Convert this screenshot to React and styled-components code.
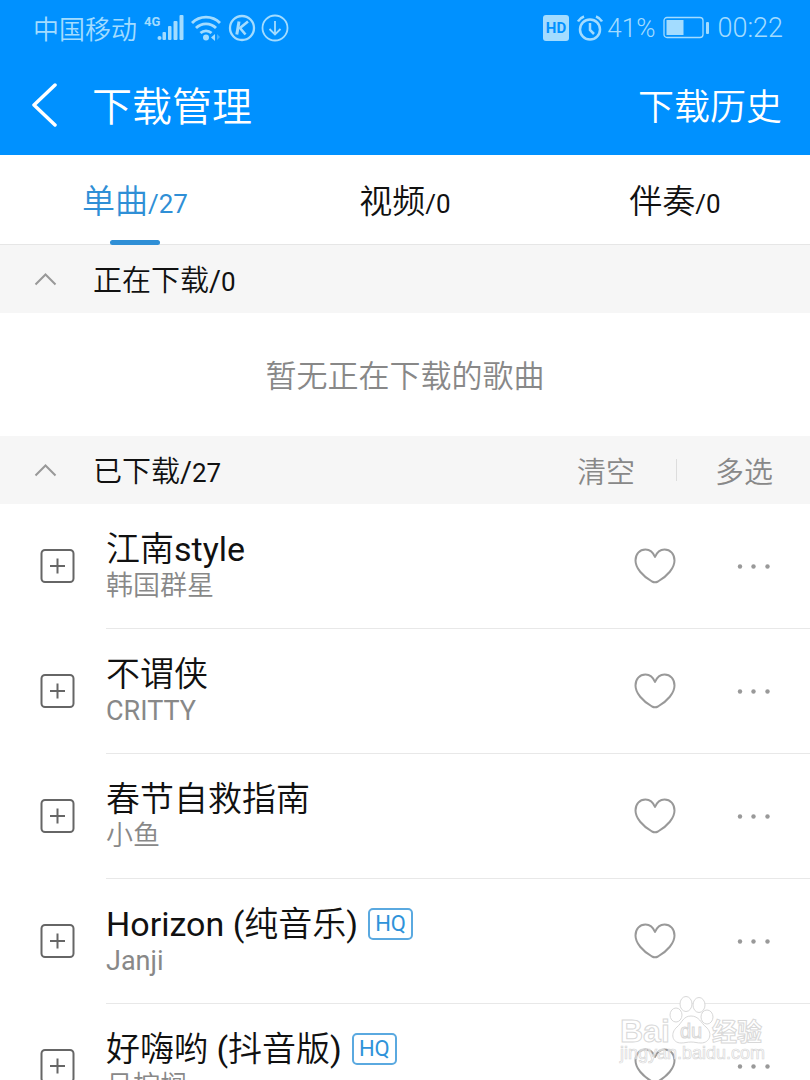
import React from 'react';
import styled, { createGlobalStyle } from 'styled-components';

const GlobalStyle = createGlobalStyle`
  * {
    box-sizing: border-box;
  }

  body {
    margin: 0;
    background-color: #fff;
    color: #111;
    font-family: Roboto, 'Noto Sans CJK SC DemiLight', 'Noto Sans CJK SC', sans-serif;
  }

  button {
    padding: 0;
    border: 0;
    background: none;
    color: inherit;
    font: inherit;
  }

  svg {
    display: block;
    flex: none;
  }
`;

const Page = styled.div`
  position: relative;
  height: 100vh;
  overflow: hidden;
`;

const Top = styled.header`
  background-color: #0091ff;
  color: #fff;
  font-weight: 350;
`;

const StatusBar = styled.div`
  display: flex;
  justify-content: space-between;
  align-items: center;
  height: 56px;
  padding: 0 27px 0 33px;
  color: #a3dcff;
  font-size: 26px;
  line-height: 36px;
`;

const StatusGroup = styled.div`
  display: flex;
  align-items: center;
  gap: ${({ $gap }) => $gap}px;
`;

const Carrier = styled.span`
  padding-top: 3px;
`;

const Clock = styled.span`
  font-size: 27px;
`;

const NavBar = styled.div`
  display: flex;
  align-items: center;
  height: 99px;
  padding: 0 28px 0 31px;
`;

const BackButton = styled.button`
  display: flex;
  width: 61px;
`;

const Title = styled.h1`
  flex: 1;
  margin: 0;
  padding-top: 5px;
  font-size: 40px;
  font-weight: inherit;
  line-height: 56px;
`;

const HistoryButton = styled.button`
  padding-top: 5px;
  font-size: 36px;
  line-height: 56px;
`;

const Tabs = styled.nav`
  display: flex;
  height: 90px;
  border-bottom: 1px solid #e6e6e6;
`;

const Tab = styled.button`
  position: relative;
  flex: 1;
  padding-top: 7px;
  color: ${({ $active }) => ($active ? '#2f8fd6' : '#111')};
  font-size: 33px;
  line-height: 48px;

  &::after {
    content: '';
    display: ${({ $active }) => ($active ? 'block' : 'none')};
    position: absolute;
    bottom: -1px;
    left: 50%;
    width: 50px;
    height: 5px;
    margin-left: -25px;
    border-radius: 3px;
    background-color: #2f8fd6;
  }
`;

const Count = styled.span`
  font-size: 26px;
`;

const SectionBar = styled.div`
  display: flex;
  align-items: center;
  height: 68px;
  padding: 0 37px 0 34px;
  background-color: #f6f6f6;
  font-size: 29px;
  line-height: 40px;
`;

const Fold = styled.button`
  display: flex;
  align-items: center;
  gap: 36px;
  margin-right: auto;
`;

const SectionName = styled.span`
  padding-top: 5px;
`;

const SectionAction = styled.button`
  padding-top: 5px;
  color: #888;
`;

const Divider = styled.span`
  width: 1px;
  height: 22px;
  margin: 0 38px 0 41px;
  background-color: #ddd;
`;

const Empty = styled.p`
  margin: 0;
  padding: 42px 0 37px;
  color: #888;
  font-size: 31px;
  line-height: 44px;
  text-align: center;
`;

const SongList = styled.ul`
  margin: 0;
  padding: 0;
  list-style: none;
`;

const Song = styled.li`
  display: flex;
  height: 125px;
  padding-left: 40px;
`;

const AddButton = styled.button`
  display: flex;
  align-items: center;
  width: 66px;
`;

const SongBody = styled.div`
  display: flex;
  flex: 1;
  align-items: center;
  padding-right: 39px;
  border-bottom: 1px solid #e8e8e8;
`;

const SongText = styled.div`
  flex: 1;
  padding-bottom: 2px;
`;

const SongName = styled.div`
  display: flex;
  align-items: center;
  gap: 10px;
  font-size: 34px;
  line-height: 42px;
`;

const Artist = styled.div`
  color: #888;
  font-size: 27px;
  line-height: 33px;
`;

const Quality = styled.span`
  padding: 0 5px;
  border: 2px solid #5aa9e0;
  border-radius: 5px;
  color: #2f93da;
  font-size: 22px;
  line-height: 28px;
`;

const LikeButton = styled.button`
  margin-right: 61px;
`;

const Watermark = styled.div`
  position: absolute;
  right: 42px;
  bottom: 16px;
  pointer-events: none;
`;

const SignalIcon = () => (
  <svg width="40" height="28" viewBox="0 0 40 28" fill="#a3dcff">
    <text x="0" y="12" fontSize="13" fontWeight="700" fontFamily="Roboto">4G</text>
    <circle cx="15.500" cy="24" r="2" />
    <rect x="18.500" y="18" width="3.500" height="8" rx="1" />
    <rect x="24" y="12" width="3.500" height="14" rx="1" />
    <rect x="29.500" y="7" width="4" height="19" rx="1" />
    <rect x="35.500" y="1" width="4" height="25" rx="1" />
  </svg>
);

const WifiIcon = () => (
  <svg width="30" height="28" viewBox="0 0 30 28" fill="none" stroke="#a3dcff" strokeWidth="2.800">
    <path d="M1 9a19.500 19.500 0 0 1 28 0" />
    <path d="M5 14a14 14 0 0 1 20 0" />
    <path d="M9.500 19a8 8 0 0 1 11 0" />
    <circle cx="15" cy="23.500" r="3" fill="#a3dcff" stroke="none" />
    <path d="M24 20v7l-4-3.500z" fill="#a3dcff" stroke="none" />
    <path d="M26 20v6l3-3z" fill="#a3dcff" fillOpacity="0.4" stroke="none" />
  </svg>
);

const KIcon = () => (
  <svg width="28" height="28" viewBox="0 0 28 28" fill="none" stroke="#a3dcff" strokeWidth="2.300">
    <circle cx="14" cy="14" r="12" />
    <path d="M11 7.500L8.800 20.500" strokeWidth="3" />
    <path d="M20 7.500l-8 6.500 5.500 6.500" strokeWidth="2.600" />
  </svg>
);

const DownloadIcon = () => (
  <svg width="28" height="28" viewBox="0 0 28 28" fill="none" stroke="#a3dcff" strokeWidth="1.800">
    <circle cx="14" cy="14" r="12.500" />
    <path d="M14 7v13.500M8.500 15l5.500 5.500 5.500-5.500" />
  </svg>
);

const HdIcon = () => (
  <svg width="26" height="26" viewBox="0 0 26 26">
    <rect width="26" height="26" rx="3" fill="#a3dcff" />
    <text x="13" y="18" textAnchor="middle" fontSize="15" fontWeight="700" fontFamily="Roboto" fill="#0091ff">HD</text>
  </svg>
);

const AlarmIcon = () => (
  <svg width="26" height="28" viewBox="0 0 26 28" fill="none" stroke="#a3dcff" strokeWidth="2.500">
    <circle cx="13" cy="15.500" r="10" />
    <path d="M1 7.500Q3 4 7 2.500M25 7.500Q23 4 19 2.500" />
    <path d="M13 9v7l4 4" />
  </svg>
);

const BatteryIcon = () => (
  <svg width="46" height="24" viewBox="0 0 46 24">
    <rect x="1" y="1.500" width="39" height="20" rx="3" fill="none" stroke="#a3dcff" strokeWidth="1.300" />
    <rect x="3.500" y="4" width="17" height="15" fill="#a3dcff" />
    <rect x="43" y="6" width="3" height="12" rx="1" fill="#a3dcff" />
  </svg>
);

const BackIcon = () => (
  <svg width="26" height="46" viewBox="0 0 26 46" fill="none" stroke="#fff" strokeWidth="3.500" strokeLinecap="round" strokeLinejoin="round">
    <path d="M24 2L3 22l21 20" />
  </svg>
);

const ChevronIcon = () => (
  <svg width="23" height="14" viewBox="0 0 23 14" fill="none" stroke="#999" strokeWidth="2">
    <path d="M1.500 12.500l10-10 10 10" />
  </svg>
);

const PlusIcon = () => (
  <svg width="35" height="35" viewBox="0 0 35 35" fill="none" stroke="#666" strokeWidth="2">
    <rect x="1.500" y="1" width="32" height="32" rx="3.500" />
    <path d="M10 17h15M17.500 9.500v15" />
  </svg>
);

const HeartIcon = () => (
  <svg width="42" height="36" viewBox="0 0 42 36" fill="none" stroke="#999" strokeWidth="2" strokeLinejoin="round">
    <path d="M21 9C19 4 15.500 1.500 11.500 1.500 5.500 1.500 1.500 6 1.500 12.500 1.500 20 8.500 28 18 33.500q3 1.500 6 0C33.500 28 40.500 20 40.500 12.500c0-6.500-4-11-10-11-4 0-7.500 2.500-9.500 7.500z" />
  </svg>
);

const MoreIcon = () => (
  <svg width="34" height="6" viewBox="0 0 34 6" fill="#999">
    <circle cx="3" cy="3.500" r="2.200" />
    <circle cx="16.500" cy="3.500" r="2.200" />
    <circle cx="30.500" cy="3.500" r="2.200" />
  </svg>
);

const WatermarkLogo = () => (
  <svg width="150" height="76" viewBox="0 0 150 76" fill="#fff" stroke="#d8d8d8" strokeWidth="1" fontFamily="'Liberation Sans', 'Noto Sans CJK SC', sans-serif">
    <ellipse cx="58" cy="27" rx="6" ry="7" />
    <ellipse cx="68" cy="16" rx="6" ry="7.500" />
    <ellipse cx="81" cy="17" rx="6" ry="7.500" />
    <ellipse cx="89" cy="29" rx="6" ry="7" />
    <path d="M73 28c-8 0-9 7-14 11-7 6-5 16 4 16 4 0 6-1 10-1s6 1 10 1c9 0 12-10 5-16-5-4-7-11-15-11z" />
    <text x="2" y="54" fontSize="32" fontWeight="700">Bai</text>
    <text x="62" y="50" fontSize="20">du</text>
    <text x="94" y="53" fontSize="25" fontWeight="700">经验</text>
    <text x="2" y="71" fontSize="18" strokeWidth="0.700" fillOpacity="0.6">jingyan.baidu.com</text>
  </svg>
);

const tabs = [
  { name: '单曲', count: 27 },
  { name: '视频', count: 0 },
  { name: '伴奏', count: 0 },
];

const songs = [
  { name: '江南style', artist: '韩国群星' },
  { name: '不谓侠', artist: 'CRITTY' },
  { name: '春节自救指南', artist: '小鱼' },
  { name: 'Horizon (纯音乐)', artist: 'Janji', hq: true },
  { name: '好嗨哟 (抖音版)', artist: '吕棕榈', hq: true },
];

const SongRow = ({ song }) => (
  <Song>
    <AddButton aria-label="添加">
      <PlusIcon />
    </AddButton>
    <SongBody>
      <SongText>
        <SongName>
          <span>{song.name}</span>
          {song.hq && <Quality>HQ</Quality>}
        </SongName>
        <Artist>{song.artist}</Artist>
      </SongText>
      <LikeButton aria-label="收藏">
        <HeartIcon />
      </LikeButton>
      <button aria-label="更多">
        <MoreIcon />
      </button>
    </SongBody>
  </Song>
);

const App = () => (
  <Page>
    <GlobalStyle />
    <Top>
      <StatusBar>
        <StatusGroup $gap={7}>
          <Carrier>中国移动</Carrier>
          <SignalIcon />
          <WifiIcon />
          <StatusGroup $gap={5}>
            <KIcon />
            <DownloadIcon />
          </StatusGroup>
        </StatusGroup>
        <StatusGroup $gap={8}>
          <HdIcon />
          <StatusGroup $gap={4}>
            <AlarmIcon />
            <span>41%</span>
          </StatusGroup>
          <BatteryIcon />
          <Clock>00:22</Clock>
        </StatusGroup>
      </StatusBar>
      <NavBar>
        <BackButton aria-label="返回">
          <BackIcon />
        </BackButton>
        <Title>下载管理</Title>
        <HistoryButton>下载历史</HistoryButton>
      </NavBar>
    </Top>
    <Tabs>
      {tabs.map((tab, i) => (
        <Tab key={tab.name} $active={i === 0}>
          {tab.name}
          <Count>/{tab.count}</Count>
        </Tab>
      ))}
    </Tabs>
    <SectionBar>
      <Fold>
        <ChevronIcon />
        <SectionName>正在下载/<Count>0</Count></SectionName>
      </Fold>
    </SectionBar>
    <Empty>暂无正在下载的歌曲</Empty>
    <SectionBar>
      <Fold>
        <ChevronIcon />
        <SectionName>已下载/<Count>27</Count></SectionName>
      </Fold>
      <SectionAction>清空</SectionAction>
      <Divider />
      <SectionAction>多选</SectionAction>
    </SectionBar>
    <SongList>
      {songs.map((song) => (
        <SongRow key={song.name} song={song} />
      ))}
    </SongList>
    <Watermark>
      <WatermarkLogo />
    </Watermark>
  </Page>
);

export default App;
